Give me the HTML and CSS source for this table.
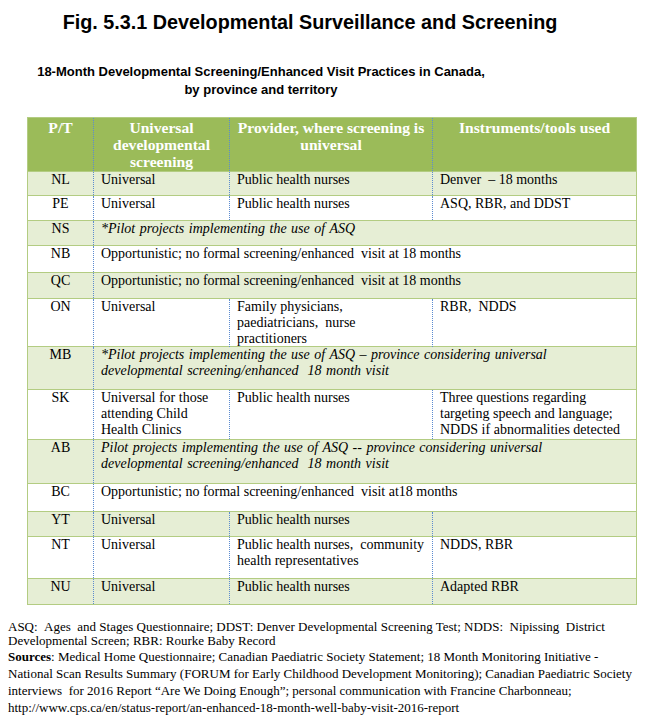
FILE: index.html
```html
<!DOCTYPE html>
<html lang="en">
<head>
<meta charset="utf-8">
<title>Fig. 5.3.1 Developmental Surveillance and Screening</title>
<link rel="stylesheet" href="styles.css">
</head>
<body>
<h1 class="title">Fig. 5.3.1 Developmental Surveillance and Screening</h1>
<h2 class="subtitle">18-Month Developmental Screening/Enhanced Visit Practices in Canada,<br>by province and territory</h2>

<div class="tbl">
  <div class="row head h54">
    <div class="c">P/T</div>
    <div class="c">Universal developmental screening</div>
    <div class="c">Provider, where screening is universal</div>
    <div class="c">Instruments/tools used</div>
  </div>
  <div class="row band h24">
    <div class="c pt">NL</div>
    <div class="c">Universal</div>
    <div class="c">Public health nurses</div>
    <div class="c">Denver &nbsp;– 18 months</div>
  </div>
  <div class="row h25">
    <div class="c pt">PE</div>
    <div class="c">Universal</div>
    <div class="c">Public health nurses</div>
    <div class="c">ASQ, RBR, and DDST</div>
  </div>
  <div class="row band h25">
    <div class="c pt">NS</div>
    <div class="c span it">*Pilot projects implementing the use of ASQ</div>
  </div>
  <div class="row h27">
    <div class="c pt">NB</div>
    <div class="c span">Opportunistic; no formal screening/enhanced &nbsp;visit at 18 months</div>
  </div>
  <div class="row band h26">
    <div class="c pt">QC</div>
    <div class="c span">Opportunistic; no formal screening/enhanced &nbsp;visit at 18 months</div>
  </div>
  <div class="row h48">
    <div class="c pt">ON</div>
    <div class="c">Universal</div>
    <div class="c">Family physicians,<br>paediatricians, &nbsp;nurse<br>practitioners</div>
    <div class="c">RBR, &nbsp;NDDS</div>
  </div>
  <div class="row band h43">
    <div class="c pt">MB</div>
    <div class="c span it">*Pilot projects implementing the use of ASQ – province considering universal<br>developmental screening/enhanced &nbsp;18 month visit</div>
  </div>
  <div class="row h50">
    <div class="c pt">SK</div>
    <div class="c">Universal for those<br>attending Child<br>Health Clinics</div>
    <div class="c">Public health nurses</div>
    <div class="c">Three questions regarding<br>targeting speech and language;<br>NDDS if abnormalities detected</div>
  </div>
  <div class="row band h44">
    <div class="c pt">AB</div>
    <div class="c span it">Pilot projects implementing the use of ASQ -- province considering universal<br>developmental screening/enhanced &nbsp;18 month visit</div>
  </div>
  <div class="row h28">
    <div class="c pt">BC</div>
    <div class="c span">Opportunistic; no formal screening/enhanced &nbsp;visit at18 months</div>
  </div>
  <div class="row band h25">
    <div class="c pt">YT</div>
    <div class="c">Universal</div>
    <div class="c">Public health nurses</div>
    <div class="c"></div>
  </div>
  <div class="row h42">
    <div class="c pt">NT</div>
    <div class="c">Universal</div>
    <div class="c">Public health nurses, &nbsp;community<br>health representatives</div>
    <div class="c">NDDS, RBR</div>
  </div>
  <div class="row band h26">
    <div class="c pt">NU</div>
    <div class="c">Universal</div>
    <div class="c">Public health nurses</div>
    <div class="c">Adapted RBR</div>
  </div>
</div>

<div class="notes">
  <p class="abbr">ASQ: &nbsp;Ages &nbsp;and Stages Questionnaire; DDST: Denver Developmental Screening Test; NDDS: &nbsp;Nipissing &nbsp;District<br>Developmental Screen; RBR: Rourke Baby Record</p>
  <p class="src"><b>Sources</b>: Medical Home Questionnaire; Canadian Paediatric Society Statement; 18 Month Monitoring Initiative -<br>National Scan Results Summary (FORUM for Early Childhood Development Monitoring); Canadian Paediatric Society<br>interviews &nbsp;for 2016 Report “Are We Doing Enough”; personal communication with Francine Charbonneau;<br>http://www.cps.ca/en/status-report/an-enhanced-18-month-well-baby-visit-2016-report</p>
</div>
</body>
</html>
```

FILE: styles.css
```css
body {
  margin: 0;
  background: #ffffff;
  color: #000000;
  font-family: "Liberation Serif", "Times New Roman", serif;
}

.title {
  width: 620px;
  margin: 11px 0 0;
  text-align: center;
  font-family: "Liberation Sans", Arial, sans-serif;
  font-weight: bold;
  font-size: 19.8px;
  line-height: 22px;
}

.subtitle {
  width: 522px;
  margin: 30px 0 0;
  text-align: center;
  font-family: "Liberation Sans", Arial, sans-serif;
  font-weight: bold;
  font-size: 13px;
  line-height: 17.5px;
}

.tbl {
  margin: 19px 0 0 27px;
  width: 610px;
  box-sizing: border-box;
  border-left: 1px solid #b3cc82;
  border-right: 1px solid #b3cc82;
  border-bottom: 1px solid #b3cc82;
}

.row {
  display: grid;
  grid-template-columns: 65px 136px 203px 204px;
  box-sizing: border-box;
  border-top: 1px solid #b3cc82;
  font-size: 14px;
  line-height: 16px;
  background: #ffffff;
}

.band { background: #e6eed5; }

.c {
  box-sizing: border-box;
  padding: 0 5px 0 7px;
  white-space: nowrap;
}

.c + .c { border-left: 1px dotted #5b8bd0; }

.pt { text-align: center; padding: 0; }

.span { grid-column: 2 / 5; }

.it { font-style: italic; word-spacing: 1px; }

.head {
  background: #9bbb59;
  color: #ffffff;
  font-weight: bold;
  font-size: 15.6px;
  line-height: 17px;
  text-align: center;
}

.head .c {
  padding: 1px 4px 0;
  white-space: normal;
}

.h24 { height: 24px; }
.h25 { height: 25px; }
.h26 { height: 26px; }
.h27 { height: 27px; }
.h28 { height: 28px; }
.h42 { height: 42px; }
.h43 { height: 43px; }
.h44 { height: 44px; }
.h48 { height: 48px; }
.h50 { height: 50px; }
.h54 { height: 54px; }

.notes {
  margin: 15px 0 0 8px;
  font-size: 13px;
  white-space: nowrap;
}

.notes p { margin: 0; }

.abbr { line-height: 14px; }

.src { line-height: 17px; }
```
